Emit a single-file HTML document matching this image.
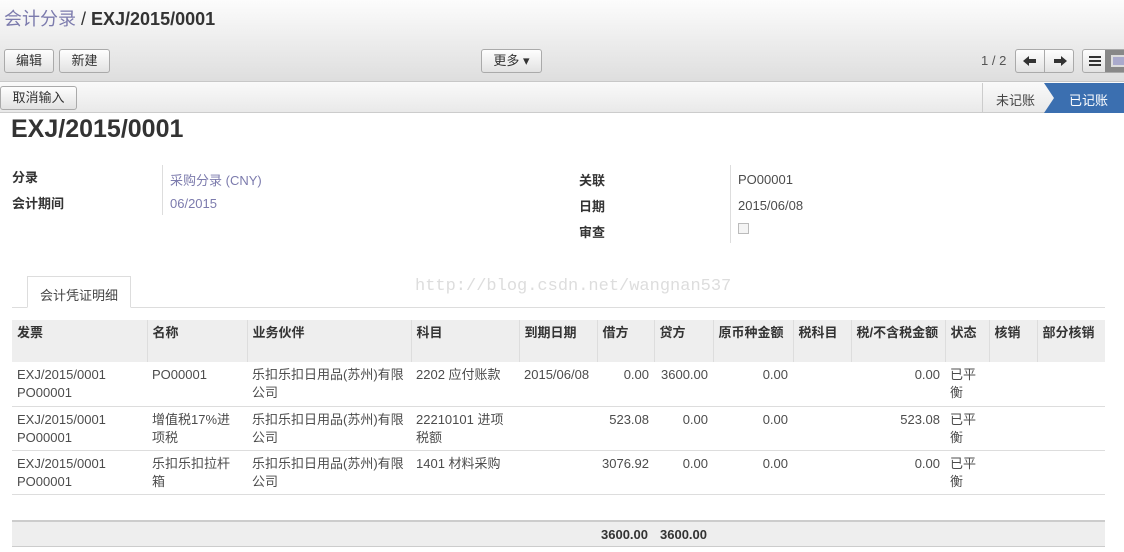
<!DOCTYPE html>
<html><head><meta charset="utf-8"><style>
*{box-sizing:border-box}
body{margin:0;width:1124px;height:552px;overflow:hidden;background:#fff;font-family:"Liberation Sans","Noto Sans CJK SC",sans-serif;font-size:13px;color:#4c4c4c;position:relative}
.a{position:absolute}
.top{left:0;top:0;width:1124px;height:82px;background:linear-gradient(#fcfcfc,#dedede);border-bottom:1px solid #c8c8c8}
.btn{position:absolute;height:24px;border:1px solid #aaa;border-radius:3px;background:linear-gradient(#fefefe,#e2e2e2);font-size:13px;color:#333;text-align:center;line-height:22px}
.sb{left:0;top:82px;width:1124px;height:31px;background:linear-gradient(#fafafa,#e9e9e9);border-bottom:1px solid #ccc}
table{position:absolute;left:12px;top:320px;border-collapse:collapse;width:1093px;table-layout:fixed}
td,th{vertical-align:top;padding:4px 5px 0;font-size:13px;line-height:18px;text-align:left;overflow:hidden}
th{background:#eee;font-weight:bold;color:#333;border-left:1px solid #ddd}
th:first-child{border-left:none}
tr.h{height:42px}
tr.r{height:44px}
tr.r td{border-bottom:1px solid #ddd}
.n{text-align:right}
.lbl{font-weight:bold;color:#333}
</style></head><body>
<div class="a top"></div>
<div class="a" style="left:4px;top:5px;font-size:18px;color:#333"><span style="color:#7c7bad">会计分录</span> / <b>EXJ/2015/0001</b></div>
<div class="btn" style="left:4px;top:49px;width:50px">编辑</div>
<div class="btn" style="left:59px;top:49px;width:51px">新建</div>
<div class="btn" style="left:481px;top:49px;width:61px">更多 ▾</div>
<div class="a" style="left:981px;top:53px;color:#555">1 / 2</div>
<div class="btn" style="left:1015px;top:49px;width:59px"></div>
<div class="a" style="left:1044px;top:50px;width:1px;height:22px;background:#aaa"></div>
<svg class="a" style="left:1022px;top:55px" width="46" height="12"><path d="M1 6L7 1V4H14V8H7V11Z" fill="#333"/><path d="M45 6L39 1V4H32V8H39V11Z" fill="#333"/></svg>
<div class="btn" style="left:1082px;top:49px;width:50px"></div>
<div class="a" style="left:1105px;top:50px;width:19px;height:22px;background:#888"></div>
<div class="a" style="left:1111px;top:55px;width:13px;height:12px;border:2px solid #ddd;border-right:none;background:#aac"></div>
<div class="a" style="left:1089px;top:56px;width:12px;height:2px;background:#333;box-shadow:0 4px #333,0 8px #333"></div>
<div class="a sb"></div>
<div class="btn" style="left:0;top:86px;width:77px;height:24px">取消输入</div>
<div class="a" style="left:982px;top:83px;width:1px;height:30px;background:#ccc"></div>
<div class="a" style="left:996px;top:90px;color:#444">未记账</div>
<svg class="a" style="left:1044px;top:83px" width="80" height="30"><path d="M0 0H80V30H0L10 15Z" fill="#3b6fb0"/></svg>
<div class="a" style="left:1069px;top:90px;color:#fff">已记账</div>
<div class="a" style="left:11px;top:115px;font-size:25px;font-weight:bold;color:#333">EXJ/2015/0001</div>
<div class="a lbl" style="left:12px;top:167px">分录</div>
<div class="a lbl" style="left:12px;top:193px">会计期间</div>
<div class="a" style="left:162px;top:165px;width:1px;height:50px;background:#ddd"></div>
<div class="a" style="left:170px;top:170px;color:#7c7bad">采购分录 (CNY)</div>
<div class="a" style="left:170px;top:196px;color:#7c7bad">06/2015</div>
<div class="a lbl" style="left:579px;top:170px">关联</div>
<div class="a lbl" style="left:579px;top:196px">日期</div>
<div class="a lbl" style="left:579px;top:222px">审查</div>
<div class="a" style="left:730px;top:165px;width:1px;height:78px;background:#ddd"></div>
<div class="a" style="left:738px;top:172px">PO00001</div>
<div class="a" style="left:738px;top:198px">2015/06/08</div>
<div class="a" style="left:738px;top:223px;width:11px;height:11px;border:1px solid #bbb;background:#f4f4f4"></div>
<div class="a" style="left:12px;top:307px;width:1093px;height:1px;background:#ddd"></div>
<div class="a" style="left:27px;top:276px;width:104px;height:32px;border:1px solid #ddd;border-bottom:1px solid #fff;background:#fff;padding:8px 0 0 12px;color:#444">会计凭证明细</div>
<div class="a" style="left:415px;top:277px;font-family:'Liberation Mono',monospace;font-size:17px;color:#ddd">http://blog.csdn.net/wangnan537</div>
<table>
<colgroup><col style="width:135px"><col style="width:100px"><col style="width:164px"><col style="width:108px"><col style="width:78px"><col style="width:57px"><col style="width:59px"><col style="width:80px"><col style="width:58px"><col style="width:94px"><col style="width:44px"><col style="width:48px"><col></colgroup>
<tr class="h"><th>发票</th><th>名称</th><th>业务伙伴</th><th>科目</th><th>到期日期</th><th>借方</th><th>贷方</th><th>原币种金额</th><th>税科目</th><th>税/不含税金额</th><th>状态</th><th>核销</th><th>部分核销</th></tr>
<tr class="r"><td>EXJ/2015/0001<br>PO00001</td><td>PO00001</td><td>乐扣乐扣日用品(苏州)有限公司</td><td>2202 应付账款</td><td>2015/06/08</td><td class="n">0.00</td><td class="n">3600.00</td><td class="n">0.00</td><td></td><td class="n">0.00</td><td>已平衡</td><td></td><td></td></tr>
<tr class="r"><td>EXJ/2015/0001<br>PO00001</td><td>增值税17%进项税</td><td>乐扣乐扣日用品(苏州)有限公司</td><td>22210101 进项税额</td><td></td><td class="n">523.08</td><td class="n">0.00</td><td class="n">0.00</td><td></td><td class="n">523.08</td><td>已平衡</td><td></td><td></td></tr>
<tr class="r"><td>EXJ/2015/0001<br>PO00001</td><td>乐扣乐扣拉杆箱</td><td>乐扣乐扣日用品(苏州)有限公司</td><td>1401 材料采购</td><td></td><td class="n">3076.92</td><td class="n">0.00</td><td class="n">0.00</td><td></td><td class="n">0.00</td><td>已平衡</td><td></td><td></td></tr>
</table>
<div class="a" style="left:12px;top:520px;width:1093px;height:27px;background:#eee;border-top:2px solid #ccc;border-bottom:1px solid #ccc"></div>
<div class="a" style="left:601px;top:527px;font-weight:bold;color:#333">3600.00</div>
<div class="a" style="left:660px;top:527px;font-weight:bold;color:#333">3600.00</div>
</body></html>
